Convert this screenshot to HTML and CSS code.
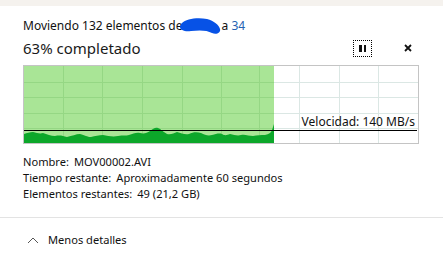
FILE: index.html
```html
<!DOCTYPE html>
<html lang="es">
<head>
<meta charset="utf-8">
<title>Moviendo</title>
<link rel="stylesheet" href="styles.css">
</head>
<body>
<div class="topbar"></div>
<main class="content">
  <div class="title">Moviendo 132 elementos de<svg class="redacted" width="42" height="18" viewBox="0 0 42 18"><path d="M3 6 C7 2, 18 0, 28 2 C35 4, 40 8, 41 12 C42 16, 37 18, 33 16 C28 13, 20 13, 12 14 C6 15, 1 13, 1 10 C1 8, 2 7, 3 6 Z" fill="#0752e6"/></svg> a <span class="link">34</span></div>
  <div class="header">
    <div class="percent">63% completado</div>
    <button class="btn pause" aria-label="Pausar"><span class="bar"></span><span class="bar"></span></button>
    <button class="btn close" aria-label="Cancelar"><svg width="8" height="8" viewBox="0 0 8 8"><path d="M1 1 L7 7 M7 1 L1 7" stroke="#111" stroke-width="1.8"/></svg></button>
  </div>
  <div class="graph">
    <svg width="396" height="79" viewBox="0 0 396 79">
      <rect x="0" y="0" width="396" height="79" fill="#fff"/>
      <g stroke="#dbe7e4" stroke-width="1">
        <line x1="40.5" y1="1" x2="40.5" y2="78"/>
        <line x1="79.5" y1="1" x2="79.5" y2="78"/>
        <line x1="119.5" y1="1" x2="119.5" y2="78"/>
        <line x1="159.5" y1="1" x2="159.5" y2="78"/>
        <line x1="198.5" y1="1" x2="198.5" y2="78"/>
        <line x1="236.5" y1="1" x2="236.5" y2="78"/>
        <line x1="276.5" y1="1" x2="276.5" y2="78"/>
        <line x1="316.5" y1="1" x2="316.5" y2="78"/>
        <line x1="355.5" y1="1" x2="355.5" y2="78"/>
        <line x1="1" y1="17.5" x2="395" y2="17.5"/>
        <line x1="1" y1="32.5" x2="395" y2="32.5"/>
        <line x1="1" y1="48.5" x2="395" y2="48.5"/>
        <line x1="1" y1="63.5" x2="395" y2="63.5"/>
      </g>
      <rect x="1" y="1" width="250" height="77" fill="#a9e596"/>
      <g stroke="#95d784" stroke-width="1">
        <line x1="40.5" y1="1" x2="40.5" y2="78"/>
        <line x1="79.5" y1="1" x2="79.5" y2="78"/>
        <line x1="119.5" y1="1" x2="119.5" y2="78"/>
        <line x1="159.5" y1="1" x2="159.5" y2="78"/>
        <line x1="198.5" y1="1" x2="198.5" y2="78"/>
        <line x1="236.5" y1="1" x2="236.5" y2="78"/>
        <line x1="1" y1="17.5" x2="251" y2="17.5"/>
        <line x1="1" y1="32.5" x2="251" y2="32.5"/>
        <line x1="1" y1="48.5" x2="251" y2="48.5"/>
        <line x1="1" y1="63.5" x2="251" y2="63.5"/>
      </g>
      <path fill="#0ca72a" d="M1 78 L1 69 C4 68 7 67 10 67 C14 68 17 69 20 68 C24 69 28 71 32 71 C37 70 40 71 44 72 C49 71 53 69 57 69 C62 70 64 72 68 72 C72 71 76 70 80 70 C85 71 90 72 95 71 C100 70 103 71 106 70 C110 69 113 67 117 68 C121 69 124 68 127 66 C130 64 132 62 135 63 C138 64 140 67 144 69 C148 70 151 68 154 67 C158 68 162 70 166 69 C170 67 174 67 178 68 C182 70 185 71 189 70 C193 69 196 68 199 69 C202 71 204 70 207 69 C211 70 215 71 218 70 C222 69 226 71 230 71 C234 70 238 70 242 70 C246 69 248 68 249 65 L251 59 L251 78 Z"/>
      <line x1="1" y1="65.5" x2="394" y2="65.5" stroke="#000" stroke-width="1"/>
      <rect x="0.5" y="0.5" width="395" height="78" fill="none" stroke="#c4c4c4"/>
    </svg>
    <div class="speed">Velocidad: 140 MB/s</div>
  </div>
  <div class="details">
    <div class="row"><span class="label">Nombre:</span>MOV00002.AVI</div>
    <div class="row"><span class="label">Tiempo restante:</span>Aproximadamente 60 segundos</div>
    <div class="row"><span class="label">Elementos restantes:</span>49 (21,2 GB)</div>
  </div>
</main>
<div class="separator"></div>
<div class="footer">
  <svg class="chevron" width="12" height="8" viewBox="0 0 12 8"><path d="M1 7 L6 2 L11 7" fill="none" stroke="#555" stroke-width="1"/></svg>
  <span>Menos detalles</span>
</div>
</body>
</html>
```

FILE: styles.css
```css
html, body {
  margin: 0;
  padding: 0;
  background: #fff;
}
body {
  font-family: "Noto Sans", "Open Sans", sans-serif;
  font-size: 12px;
  line-height: 16px;
  color: #111;
  width: 443px;
  height: 256px;
  overflow: hidden;
}
.topbar {
  height: 6px;
  background: #f5f2ee;
}
.content {
  padding: 0 25px 0 23px;
}
.title {
  margin-top: 11px;
  height: 16px;
  white-space: nowrap;
}
.redacted {
  vertical-align: -5px;
  margin-left: -3px;
  margin-right: -3px;
}
.link {
  color: #2462b3;
}
.header {
  display: flex;
  align-items: center;
  margin-top: 5px;
  height: 20px;
}
.percent {
  flex: 1;
  font-size: 15px;
  line-height: 20px;
  color: #1a1a1a;
}
.btn {
  border: 0;
  background: transparent;
  padding: 0;
  margin: 0;
  display: flex;
  align-items: center;
  justify-content: center;
}
.pause {
  width: 19px;
  height: 17px;
  box-sizing: border-box;
  border: 1px dotted #000;
  gap: 2px;
  margin-right: 26px;
  margin-top: 1px;
}
.pause .bar {
  width: 2.5px;
  height: 7px;
  background: #111;
}
.close {
  width: 20px;
  height: 17px;
}
.graph {
  position: relative;
  margin-top: 7px;
  width: 396px;
  height: 79px;
}
.graph svg {
  display: block;
}
.speed {
  position: absolute;
  right: 4px;
  top: 49px;
  line-height: 16px;
  color: #111;
  white-space: nowrap;
}
.details {
  margin-top: 10px;
  font-size: 11.1px;
  color: #111;
}
.row {
  height: 16px;
  white-space: nowrap;
}
.label {
  margin-right: 5px;
}
.separator {
  margin-top: 15px;
  height: 1px;
  background: #e3e3e3;
}
.footer {
  display: flex;
  align-items: center;
  margin-top: 14px;
  padding-left: 27px;
  height: 16px;
  font-size: 11.1px;
  color: #111;
}
.chevron {
  margin-right: 9px;
}
```
